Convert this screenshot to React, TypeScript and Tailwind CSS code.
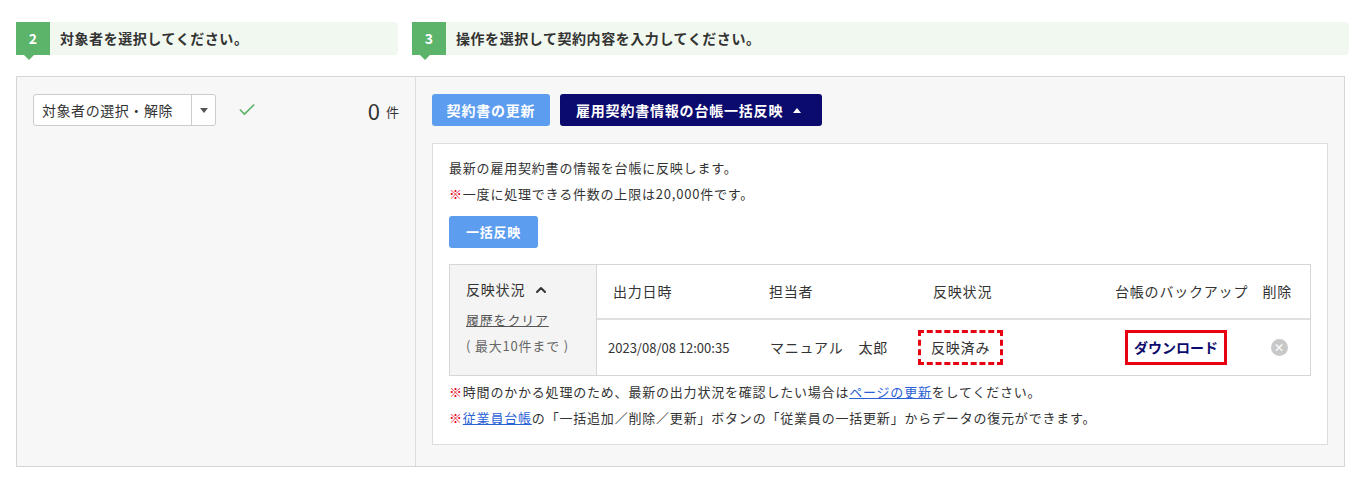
import { ChevronUp, Check } from 'lucide-react';

function StepHead({ n, text, className }: { n: number; text: string; className: string }) {
  return (
    <div className={`relative flex items-center h-[33px] bg-[#f1f8f0] rounded-sm ${className}`}>
      <div className="relative flex items-center justify-center w-[34px] h-full bg-[#5cb46a] text-white font-bold text-[14px]">
        {n}
        <span className="absolute left-[8px] -bottom-[5px] w-0 h-0 border-l-[5px] border-r-[5px] border-t-[5px] border-l-transparent border-r-transparent border-t-[#5cb46a]" />
      </div>
      <span className="ml-[10px] text-[14px] font-bold text-[#333] tracking-[0.04em]">{text}</span>
    </div>
  );
}

export default function App() {
  return (
    <div className="w-[1365px] h-[478px] bg-white text-[#333] pt-[22px] px-[16px]" style={{ fontFamily: '"Noto Sans CJK JP", "Noto Sans", sans-serif' }}>
      <div className="flex gap-[14px]">
        <StepHead n={2} text="対象者を選択してください。" className="w-[382px]" />
        <StepHead n={3} text="操作を選択して契約内容を入力してください。" className="flex-1" />
      </div>

      <div className="mt-[21px] flex border border-[#d6d6d6] bg-[#f7f7f7] h-[391px] w-[1329px]">
        <div className="w-[400px] border-r border-[#dcdcdc] px-[16px] pt-[17px]">
          <div className="flex items-center">
            <div className="flex h-[32px] w-[183px] border border-[#ccc] rounded-[3px] bg-white">
              <span className="flex-1 flex items-center pl-[8px] text-[14px] tracking-[0.04em]">対象者の選択・解除</span>
              <span className="w-[24px] border-l border-[#ccc] flex items-center justify-center">
                <span className="w-0 h-0 border-l-[4px] border-r-[4px] border-t-[5px] border-l-transparent border-r-transparent border-t-[#555]" />
              </span>
            </div>
            <Check className="ml-[21px] w-[20px] h-[20px] text-[#5cb46a]" strokeWidth={2} />
            <span className="ml-auto text-[22px] leading-none text-[#333]">0</span>
            <span className="ml-[6px] text-[13px] mt-[4px]">件</span>
          </div>
        </div>

        <div className="flex-1 px-[16px] pt-[17px] tracking-[0.05em]">
          <div className="flex gap-[10px]">
            <button className="h-[32px] w-[118px] bg-[#5d9df0] text-white text-[14px] font-bold rounded-[3px]">契約書の更新</button>
            <button className="h-[32px] w-[262px] pl-[16px] pr-[14px] bg-[#0b0a6d] text-white text-[14px] font-bold rounded-[3px] flex items-center gap-[10px]">
              雇用契約書情報の台帳一括反映
              <span className="w-0 h-0 border-l-[4px] border-r-[4px] border-b-[5px] border-l-transparent border-r-transparent border-b-white" />
            </button>
          </div>

          <div className="mt-[17px] bg-white border border-[#ddd] h-[302px] px-[16px] pt-[14px] text-[13px]">
            <p className="leading-[20px]">最新の雇用契約書の情報を台帳に反映します。</p>
            <p className="mt-[6px] leading-[20px]"><span className="text-[#e60012]">※</span>一度に処理できる件数の上限は20,000件です。</p>
            <button className="mt-[12px] h-[32px] w-[89px] bg-[#5d9df0] text-white text-[13px] font-bold rounded-[3px]">一括反映</button>

            <div className="mt-[16px] flex border border-[#d6d6d6] h-[112px] w-[862px]">
              <div className="w-[147px] bg-[#f4f4f4] border-r border-[#d6d6d6] pl-[16px] pt-[14px]">
                <div className="flex items-center gap-[8px] text-[14px]">反映状況 <ChevronUp className="w-[16px] h-[16px]" strokeWidth={3} /></div>
                <div className="mt-[10px] underline text-[#555]">履歴をクリア</div>
                <div className="mt-[6px] text-[#666]">( 最大10件まで )</div>
              </div>
              <div className="flex-1 flex flex-col">
                <div className="h-[55px] flex items-center border-b-2 border-[#e0e0e0] text-[14px]">
                  <span className="w-[159px] pl-[16px]">出力日時</span>
                  <span className="w-[177px] pl-[13px]">担当者</span>
                  <span className="w-[182px]">反映状況</span>
                  <span className="w-[135px] text-left whitespace-nowrap">台帳のバックアップ</span>
                  <span className="flex-1 text-right pr-[18px]">削除</span>
                </div>
                <div className="flex-1 flex items-center text-[13px]">
                  <span className="w-[162px] pl-[11px] tracking-normal">2023/08/08 12:00:35</span>
                  <span className="w-[159px] pl-[11px] text-[14px]">マニュアル　太郎</span>
                  <span className="w-[207px]"><span className="inline-block border-[3px] border-dashed border-[#e60012] px-[10px] py-[4px] text-[14px]">反映済み</span></span>
                  <span className="w-[112px]"><span className="inline-block border-[3px] border-[#e60012] px-[6px] py-[4px] font-bold text-[14px] text-[#0b0a6d] tracking-normal">ダウンロード</span></span>
                  <span className="flex-1 flex justify-end pr-[22px]">
                    <span className="w-[17px] h-[17px] rounded-full bg-[#c8c8c8] text-white text-[11px] font-bold flex items-center justify-center">×</span>
                  </span>
                </div>
              </div>
            </div>
            <p className="mt-[6px] leading-[20px]"><span className="text-[#e60012]">※</span>時間のかかる処理のため、最新の出力状況を確認したい場合は<span className="text-[#2a5fd6] underline">ページの更新</span>をしてください。</p>
            <p className="mt-[6px] leading-[20px]"><span className="text-[#e60012]">※</span><span className="text-[#2a5fd6] underline">従業員台帳</span>の「一括追加／削除／更新」ボタンの「従業員の一括更新」からデータの復元ができます。</p>
          </div>
        </div>
      </div>
    </div>
  );
}
